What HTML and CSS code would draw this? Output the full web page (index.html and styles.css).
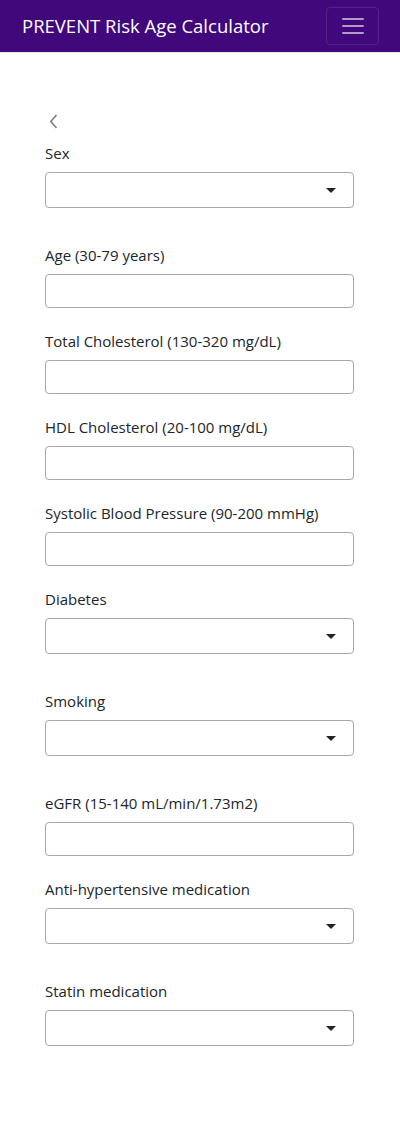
FILE: index.html
```html
<!DOCTYPE html>
<html lang="en">
<head>
<meta charset="utf-8">
<title>PREVENT Risk Age Calculator</title>
<link rel="stylesheet" href="styles.css">
</head>
<body>
<header class="navbar">
  <span class="brand">PREVENT Risk Age Calculator</span>
  <button class="toggler" aria-label="Menu">
    <span class="bar"></span><span class="bar"></span><span class="bar"></span>
  </button>
</header>
<main class="content">
  <a class="back" href="#" aria-label="Back">
    <svg width="11" height="15" viewBox="0 0 11 15"><path d="M8.5 1 L2.8 7.5 L8.5 14" fill="none" stroke="#7a7a7a" stroke-width="1.5"/></svg>
  </a>
  <div class="group select-group">
    <label class="label">Sex</label>
    <div class="select"><span class="caret"></span></div>
  </div>
  <div class="group">
    <label class="label">Age (30-79 years)</label>
    <div class="input"></div>
  </div>
  <div class="group">
    <label class="label">Total Cholesterol (130-320 mg/dL)</label>
    <div class="input"></div>
  </div>
  <div class="group">
    <label class="label">HDL Cholesterol (20-100 mg/dL)</label>
    <div class="input"></div>
  </div>
  <div class="group">
    <label class="label">Systolic Blood Pressure (90-200 mmHg)</label>
    <div class="input"></div>
  </div>
  <div class="group select-group">
    <label class="label">Diabetes</label>
    <div class="select"><span class="caret"></span></div>
  </div>
  <div class="group select-group">
    <label class="label">Smoking</label>
    <div class="select"><span class="caret"></span></div>
  </div>
  <div class="group">
    <label class="label">eGFR (15-140 mL/min/1.73m2)</label>
    <div class="input"></div>
  </div>
  <div class="group select-group">
    <label class="label">Anti-hypertensive medication</label>
    <div class="select"><span class="caret"></span></div>
  </div>
  <div class="group select-group">
    <label class="label">Statin medication</label>
    <div class="select"><span class="caret"></span></div>
  </div>
</main>
</body>
</html>
```
FILE: styles.css
```css
* { box-sizing: border-box; }
html, body { margin: 0; padding: 0; background: #fff; }
body { font-family: "Open Sans", "Liberation Sans", sans-serif; color: #212529; }

.navbar {
  height: 53px;
  background: #40087a;
  border-bottom: 1px solid #e4e2ea;
  display: flex;
  align-items: center;
  justify-content: space-between;
  padding: 0 21px 0 22px;
}
.brand {
  color: #fff;
  font-size: 18.5px;
  line-height: 26px;
  margin-top: -1px;
}
.toggler {
  width: 53px;
  height: 38px;
  margin-top: -1px;
  background: transparent;
  border: 1px solid rgba(255,255,255,0.1);
  border-radius: 4px;
  display: flex;
  flex-direction: column;
  align-items: center;
  justify-content: center;
  gap: 5px;
  padding: 0;
}
.bar {
  display: block;
  width: 22px;
  height: 2px;
  background: rgba(255,255,255,0.6);
  border-radius: 1px;
}

.content {
  padding: 54px 46px 40px 45px;
}
.back {
  display: flex;
  align-items: center;
  height: 22px;
  width: 20px;
  padding-left: 3px;
  padding-top: 6px;
  margin-bottom: 14px;
}
.group { margin-bottom: 23px; }
.select-group { margin-bottom: 37px; }
.label {
  display: block;
  font-size: 15px;
  line-height: 21px;
  margin-bottom: 8px;
}
.input, .select {
  border: 1px solid #a8a8a8;
  border-radius: 4px;
  background: #fff;
  width: 100%;
}
.input { height: 34px; }
.select {
  height: 36px;
  display: flex;
  align-items: center;
  justify-content: flex-end;
  padding-right: 17px;
}
.caret {
  width: 0;
  height: 0;
  border-left: 5px solid transparent;
  border-right: 5px solid transparent;
  border-top: 5px solid #222;
}
```
